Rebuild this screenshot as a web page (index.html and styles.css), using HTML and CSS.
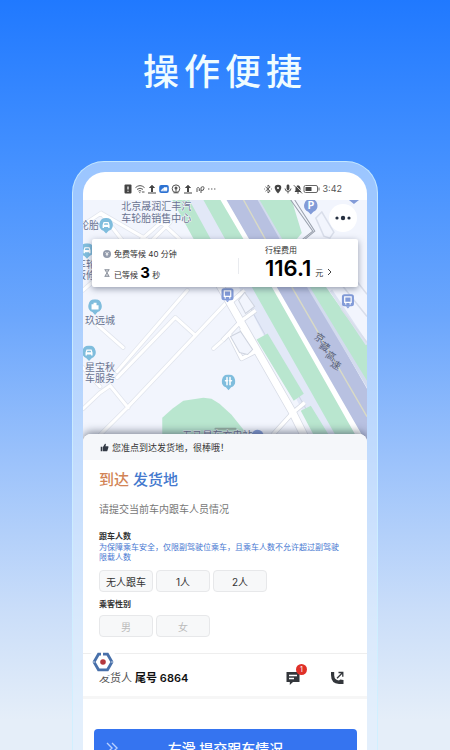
FILE: index.html
```html
<!DOCTYPE html>
<html lang="zh-CN">
<head>
<meta charset="utf-8">
<meta name="viewport" content="width=device-width, initial-scale=1">
<title>操作便捷</title>
<link rel="stylesheet" href="styles.css">
</head>
<body>
<main class="promo">
  <h1 class="headline">操作便捷</h1>
  <div class="phone">
    <div class="screen">
      <header class="status">
        <div class="status-group">
          <svg class="ico" viewBox="0 0 10 10"><rect x="1.5" y=".5" width="7" height="9" rx="1" fill="#444"/><path d="M5 2.5v3M5 6.7v1" stroke="#fff" stroke-width="1.2"/></svg>
          <svg class="ico" viewBox="0 0 10 10" fill="none" stroke="#555"><path d="M.5 3.6Q5-.4 9.5 3.6M2 5.4Q5 3 8 5.4M3.5 7.1Q5 6 6.2 7.1"/><path d="M4.3 8.6h1M7 8h2.5"/></svg>
          <svg class="ico" viewBox="0 0 10 10"><path d="M5 .8 8.2 4H6v4H4V4H1.8zM1 8.6h8v.9H1z" fill="#444"/></svg>
          <svg class="ico" viewBox="0 0 10 10"><rect x=".2" y="1" width="9.6" height="8" rx="2" fill="#2d72d2"/><path d="M2 6.5 4.5 4v2.5zM5 3.5h3v3H5zM2 7h6" fill="#fff" stroke="#fff" stroke-width=".5"/></svg>
          <svg class="ico" viewBox="0 0 10 10" fill="none" stroke="#555"><circle cx="5" cy="4.7" r="3.8"/><circle cx="5" cy="4" r="1.5" fill="#555" stroke="none"/><path d="M5 5v3M2.5 8.8h5"/></svg>
          <svg class="ico" viewBox="0 0 10 10"><path d="M5 .8 8.2 4H6v4H4V4H1.8zM1 8.6h8v.9H1z" fill="#444"/></svg>
          <svg class="ico" viewBox="0 0 10 10" fill="none" stroke="#555"><path d="M2 8V4.5Q3 2 4.3 4.5V7M6 9V3.5q3-2 3 .7T6.2 6.5"/></svg>
          <svg class="ico" viewBox="0 0 10 10" fill="#666"><circle cx="1.8" cy="5" r=".7"/><circle cx="4.8" cy="5" r=".7"/><circle cx="7.8" cy="5" r=".7"/></svg>
        </div>
        <div class="status-group status-right">
          <svg class="ico" viewBox="0 0 10 10" fill="none" stroke="#555" stroke-width=".9"><path d="m2.500 2.800 4.700 4.300L5 9V1l2.200 1.900-4.700 4.300M1 5h.8M8.200 5H9"/></svg>
          <svg class="ico" viewBox="0 0 10 10"><path d="M5 .8C.2.8 1 5.8 5 9.4 9 5.8 9.8.8 5 .8z" fill="#444"/><circle cx="5" cy="4" r="1.1" fill="#fff"/></svg>
          <svg class="ico" viewBox="0 0 10 10"><rect x="3.6" y=".6" width="2.8" height="5.6" rx="1.4" fill="#444"/><path d="M2 4.5Q2.2 7.4 5 7.4T8 4.5M5 7.4v2" fill="none" stroke="#444" stroke-width=".9"/></svg>
          <svg class="ico" viewBox="0 0 10 10"><path d="M1.5 8 2.5 6.5V4Q3 1.5 5 1.2 7 1.5 7.5 4v2.5L8.5 8zM4 8.5h2v1H4z" fill="#444"/><path d="m1.600.7 8 8" stroke="#fff" stroke-width=".8"/><path d="m.8 1.2 8.2 8.2" stroke="#444" stroke-width=".9"/></svg>
          <svg class="battery" viewBox="0 0 17 10"><rect x="1" y="1.5" width="13.5" height="7" rx="1.5" fill="none" stroke="#666"/><path d="M2.500 3h6v4h-6z" fill="#444"/><path d="M16 3.500v3" stroke="#666"/></svg>
          <time class="clock">3:42</time>
        </div>
      </header>

      <section class="map">
        <svg class="map-art" viewBox="83 200 283 244" preserveAspectRatio="xMidYMin slice">
          <rect x="83" y="200" width="283" height="244" fill="#f2f5fd"/>
          <defs>
            <g id="streets" fill="none" stroke-linejoin="round" stroke-linecap="round">
              <path d="M187 290 117 371M175 317 117 377M175 317l20 18M228 300 127 407 100 434M83 408l17-16 10-7 18 22M90 318l33 29M83 367l17 19M83 225l18-12 52 30M83 290l78-68 30 28M101 213l35 45M130 262l40-40"/>
              <path d="M213 348l16-14"/>
            </g>
            <path id="avenue" fill="none" d="M214 276 228 300 240 321 292 412 308 444"/>
            <path id="crossings" fill="none" stroke-linejoin="round" d="M222 340l18-19 15-11M272 434l20-22 12-10M230 302l14-12M229 334l12 24 12-6-12-24"/>
            <symbol id="pin" viewBox="0 0 14 16"><path d="M7 0a6.600 6.600 0 0 1 2.600 12.700L7 15.500l-2.600-2.800A6.600 6.600 0 0 1 7 0z"/></symbol>
            <g id="car"><path d="m-3.500 0 1-3h5l1 3v3h-1.400V2h-4.200v1h-1.400z" fill="#fff"/><path d="M-2.200-.3l.6-1.500h3.200l.6 1.500z" fill="#7fbddd"/></g>
            <g id="bus"><rect x="-6" y="-6" width="12" height="12" rx="2.500" fill="#829bd8"/><path d="m-2 6 2 2 2-2z" fill="#829bd8"/><path d="M-3.200-3.500h6.400v5.500h-6.400zM-3 3.600h1.500M1.500 3.600H3" fill="none" stroke="#fff" stroke-width="1.200"/></g>
          </defs>
          <use href="#streets" stroke="#e1e5ed" stroke-width="4.500"/>
          <use href="#streets" stroke="#fff" stroke-width="3"/>
          <path d="M162 444v-27l10-9 11-8 20-3 8 1 8 5 12 11 24 30z" fill="#b9e6cf"/>
          <path d="M186 200h18l131 234 5 10h-21L240 290z" fill="#e2e8f7"/>
          <path d="M240 290 325 444" stroke="#cdd4e6" fill="none"/>
          <path d="M172 200h17l23 42h-17zM203 200h19l55 90 86 154h-23L253 290z" fill="#b9e6cf"/>
          <path d="M220 200h8l137 234v10h-5L273 290z" fill="#fff"/>
          <path d="M226 200h36l48 90 56 98v55L278 290z" fill="#b8c1e1"/>
          <path d="M243 200l50 90 73 126" fill="none" stroke="#d9dac5" stroke-width="1.400"/>
          <path d="M257 200h9l52 90 48 88v9L308 290z" fill="#d3dbee"/>
          <path d="M259 200h32l10 33-5 6 30 49 40 56v36L311 290z" fill="#b9e6cf"/>
          <path d="M330 290l36 54" fill="none" stroke="#dde3f2" stroke-width="3"/>
          <use href="#avenue" stroke="#d7dbe5" stroke-width="8.500"/>
          <use href="#crossings" stroke="#d7dbe5" stroke-width="5"/>
          <use href="#avenue" stroke="#fff" stroke-width="7"/>
          <use href="#crossings" stroke="#fff" stroke-width="3.500"/>
          <path d="m256 339 11-6 36 60-10 7zM300 410l10-5 24 39h-16z" fill="#b9e6cf"/>
          <path d="m230 336 10-5 12 18-5 5-8-2zM238 300l6-8 10 14-9 7z" fill="#f2f5fd" stroke="#cfd4df"/>
          <path d="m290 200 22 31-15 12M294 200l20 31-17 14" fill="none" stroke="#9aa1ad"/>
          <path d="m315 218 6-6 12 20-4 6-6-2zM326 266l40 50M344 266l22 28M340 308l26 34" fill="none" stroke="#d9deea" stroke-width="1.500"/>
          <rect x="214" y="427" width="22" height="2" rx="1" fill="#94ad9f"/>
          <g class="map-label">
            <text x="121" y="210">北京晟润汇丰汽</text>
            <text x="121" y="222">车轮胎销售中心</text>
            <text x="79" y="229">轮胎</text>
            <text x="76" y="268">车轮</text>
            <text x="76" y="279">钣修</text>
            <text x="85" y="324">玖远城</text>
            <text x="85" y="370">星宝秋</text>
            <text x="85" y="381">车服务</text>
            <text x="182" y="438">五马星车充电站</text>
          </g>
          <g class="road-label">
            <text x="314" y="341" transform="rotate(30 319 337)">京</text>
            <text x="319" y="350" transform="rotate(30 324 346)">藏</text>
            <text x="325" y="359" transform="rotate(30 330 355)">高</text>
            <text x="330" y="368" transform="rotate(30 335 364)">速</text>
          </g>
          <g fill="#7fbddd">
            <use href="#pin" x="99" y="218" width="14" height="16"/>
            <use href="#pin" x="80" y="243" width="14" height="16"/>
            <use href="#pin" x="88" y="299" width="14" height="16"/>
            <use href="#pin" x="82" y="345" width="14" height="16"/>
            <use href="#pin" x="221" y="374" width="14" height="16"/>
          </g>
          <use href="#car" x="106" y="225"/><use href="#car" x="87" y="250"/><use href="#car" x="89" y="352"/>
          <path d="M91.500 309v-5h2v-1.500h3V305h2v4z" fill="#fff"/>
          <path d="M226.500 377v7M229.500 377v7M225 380h2M229 380h2" stroke="#fff" stroke-width="1.500" stroke-linecap="round"/>
          <use href="#pin" x="303" y="199" width="14" height="16" fill="#829bd8"/>
          <text class="parking" x="307" y="209">P</text>
          <path d="M348 200h10l-5 4z" fill="#829bd8"/>
          <use href="#bus" x="227" y="294"/><use href="#bus" x="347" y="300"/>
          <circle cx="257" cy="435" r="6" fill="#829bd8"/>
        </svg>
        <button class="more" aria-label="更多"><svg viewBox="0 0 28 28"><circle cx="8" cy="14" r="1.600"/><circle cx="14" cy="14" r="2.200"/><circle cx="20" cy="14" r="1.600"/></svg></button>
        <div class="fare-card">
          <div class="wait">
            <p class="wait-row"><svg class="mini" viewBox="0 0 8 8"><circle cx="4" cy="4" r="4" fill="#929aab"/><path d="m2.500 2 1.500 2 1.500-2M4 4v2.200M2.700 4.300h2.600" stroke="#fff" stroke-width=".8" fill="none"/></svg><span>免费等候 40 分钟</span></p>
            <p class="wait-row"><svg class="mini" viewBox="0 0 8 8" fill="none" stroke="#858b96" stroke-width=".9"><path d="M1.500.7h5M1.500 7.400h5M2.200.7c0 2 3.600 4.200 3.600 6.600M5.800.7c0 2-3.600 4.200-3.600 6.600M3 2h2M3 6h2"/></svg><span>已等候 <b class="seconds">3</b> 秒</span></p>
          </div>
          <a class="fare" href="#fare">
            <span>行程费用</span>
            <span class="fare-sum"><b class="amount">116.1</b> 元 <svg class="chevron" viewBox="0 0 5 8"><path d="m1 1 3 3-3 3" fill="none" stroke="#444"/></svg></span>
          </a>
        </div>
      </section>

      <section class="sheet">
        <p class="tip"><svg class="thumb" viewBox="0 0 10 10" fill="#333a45"><path d="M.8 4.200h1.900v5H.8zM3.300 4.400 5.500.7c1 0 1.300.8 1 1.500L6 3.700h2.800q.9.2.6 1.100L8.200 8.500q-.2.7-1 .7H3.300z"/></svg>您准点到达发货地，很棒哦！</p>
        <div class="form">
          <h2 class="title"><span class="arrive">到达</span> 发货地</h2>
          <p class="subtitle">请提交当前车内跟车人员情况</p>
          <h3 class="label">跟车人数</h3>
          <p class="hint">为保障乘车安全，仅限副驾驶位乘车，且乘车人数不允许超过副驾驶限载人数</p>
          <div class="options">
            <button class="option">无人跟车</button>
            <button class="option">1人</button>
            <button class="option">2人</button>
          </div>
          <h3 class="label">乘客性别</h3>
          <div class="options">
            <button class="option" disabled>男</button>
            <button class="option" disabled>女</button>
          </div>
        </div>
        <div class="contact">
          <p class="sender">发货人 <b>尾号 6864</b></p>
          <button class="action" aria-label="消息"><svg viewBox="0 0 16 16"><path d="M1.500 2h13v10H8l-3.200 3v-3H1.500z" fill="#33363b"/><path d="M4 5.500h8M4 8.500h5" stroke="#fff" stroke-width="1.300"/></svg><span class="badge">1</span></button>
          <button class="action" aria-label="电话"><svg viewBox="0 0 16 16"><path d="M2 2h3.200v3.500Q5.500 10 10 10.500l1.200-1 3.300.5v4H10Q2 13.500 2 5z" fill="#33363b"/><path d="M8 8.200 13.500 2.700M9.500 2.500h4.300v4.300" fill="none" stroke="#33363b" stroke-width="1.300"/></svg></button>
          <svg class="float-logo" viewBox="0 0 30 30"><circle cx="15" cy="15" r="14.500" fill="#fff"/><path d="M13 7.200h-2.500L6 15l4.500 7.800h9L24 15l-4.500-7.800H15" fill="none" stroke="#4870aa" stroke-width="2.800"/><path d="M4 15h3M23 15h3" stroke="#fff" stroke-width=".7"/><circle cx="15" cy="15" r="2.800" fill="#b4383e"/></svg>
        </div>
        <div class="submit-bar">
          <button class="submit"><svg class="arrows" viewBox="0 0 12 12"><path d="m1 1 5 5-5 5M6 1l5 5-5 5" fill="none" stroke="#b8d0ff" stroke-width="1.400"/></svg><span>右滑 提交跟车情况</span></button>
        </div>
      </section>
    </div>
  </div>
</main>
</body>
</html>
```
FILE: styles.css
```css
* { box-sizing: border-box; margin: 0; }
html, body { height: 100%; }
body {
  overflow: hidden;
  font-family: Inter, "Noto Sans CJK SC", sans-serif;
  font-size: 8px;
  color: #333;
}
button { font: inherit; color: inherit; border: 0; padding: 0; background: none; }
svg { display: block; }

.promo {
  height: 100%;
  overflow: hidden;
  display: flex;
  flex-direction: column;
  padding: 48px 16% 0;
  background: linear-gradient(#2079ff 0%, #4591ff 22%, #6ba6fc 42%, #9dc3fb 62%, #c9ddf9 81%, #e5eef9 96%);
}
.headline {
  flex: none;
  font-size: 36px;
  line-height: 48px;
  font-weight: 500;
  letter-spacing: 5px;
  text-align: center;
  color: #effcff;
}
.phone {
  flex: none;
  margin-top: 65px;
  padding: 10px 10px 0;
  border: 1px solid rgba(205, 240, 255, .8);
  border-bottom: 0;
  border-radius: 32px 32px 0 0;
  background: rgba(225, 240, 255, .55);
}
.screen {
  overflow: hidden;
  border-radius: 22px 22px 0 0;
  background: #fff;
}

.status {
  height: 28px;
  display: flex;
  justify-content: space-between;
  align-items: center;
  padding: 6px 25px 0 40px;
}
.status-group { display: flex; align-items: center; gap: 2px; }
.status-right { gap: 0; }
.ico { width: 10px; height: 10px; }
.battery { width: 17px; height: 10px; }
.clock { margin-left: 3px; font-size: 9px; line-height: 12px; color: #555; }

.map { position: relative; height: 244px; }
.map-art { width: 100%; height: 100%; }
.map-label { font-size: 10px; fill: #6a7391; }
.map-label text { paint-order: stroke; stroke: #f4f7fd; stroke-width: 1px; }
.road-label { font-size: 10px; fill: #59617b; }
.parking { font-size: 10px; font-weight: 700; fill: #fff; }
.more {
  position: absolute;
  top: 4px;
  right: 10px;
  width: 28px;
  height: 28px;
  border-radius: 50%;
  background: #fff;
  fill: #263040;
}
.fare-card {
  position: absolute;
  top: 39px;
  left: 9px;
  right: 9px;
  height: 48px;
  display: flex;
  align-items: center;
  border-radius: 2px;
  background: #fff;
  box-shadow: 0 2px 6px rgba(60, 70, 95, .5);
}
.wait { flex: 1; padding-left: 11px; }
.wait-row { display: flex; align-items: center; gap: 3px; height: 19px; }
.mini { width: 8px; height: 8px; }
.seconds { font-size: 15px; line-height: 16px; color: #000; }
.fare {
  width: 120px;
  padding: 3px 0 0 27px;
  background: linear-gradient(#e9ebef, #e9ebef) 0 60% / 1px 16px no-repeat;
  color: inherit;
  text-decoration: none;
}
.fare > span { display: flex; line-height: 12px; }
.fare .fare-sum { align-items: baseline; gap: 4px; line-height: 24px; }
.amount { font-size: 22px; font-weight: 600; color: #000; }
.chevron { width: 5px; height: 8px; }

.sheet {
  position: relative;
  margin-top: -10px;
  overflow: hidden;
  border-radius: 8px 8px 0 0;
  background: #fff;
  box-shadow: 0 -2px 8px rgba(50, 60, 80, .6);
}
.tip {
  display: flex;
  align-items: center;
  gap: 3px;
  height: 26px;
  padding-left: 17px;
  background: #f5f7fa;
  font-size: 9px;
}
.thumb { width: 9px; height: 9px; }
.form { padding: 8px 16px 16px; }
.title { font-size: 15px; line-height: 24px; font-weight: 500; color: #4479ce; }
.arrive { color: #d28456; }
.subtitle { margin-top: 8px; font-size: 10px; line-height: 18px; color: #777; }
.label { margin-top: 12px; font-size: 8px; line-height: 12px; font-weight: 600; color: #333; }
.options + .label { margin-top: 6px; }
.hint { padding: 0 8px 3px 0; font-size: 8px; line-height: 10px; color: #4777d1; }
.options { display: flex; gap: 3px; margin-top: 5px; }
.option {
  width: 54px;
  height: 22px;
  border: 1px solid #e7e8ea;
  border-radius: 4px;
  background: #f7f8f9;
  font-size: 10px;
}
.option:disabled { color: #bbb; }

.contact {
  position: relative;
  display: flex;
  align-items: center;
  gap: 28px;
  height: 46px;
  padding: 6px 22px 0 16px;
  border-top: 1px solid #eee;
  border-bottom: 3px solid #f6f6f6;
}
.sender { flex: 1; font-size: 11px; line-height: 16px; color: #555; }
.sender b { font-weight: 600; color: #111; }
.action { position: relative; width: 16px; height: 16px; }
.badge {
  position: absolute;
  top: -6px;
  right: -6px;
  width: 11px;
  height: 11px;
  border-radius: 50%;
  background: #df3028;
  color: #fff;
  font-size: 7px;
  line-height: 11px;
}
.float-logo { position: absolute; top: -7px; left: 5px; width: 30px; height: 30px; }
.submit-bar { padding: 30px 10px 20px 11px; }
.submit {
  display: flex;
  align-items: center;
  width: 100%;
  height: 38px;
  padding: 0 24px 0 12px;
  border-radius: 4px;
  background: #3574f0;
  color: #fff;
  font-size: 14px;
  font-weight: 500;
}
.arrows { width: 12px; height: 12px; }
.submit span { flex: 1; text-align: center; }
```
